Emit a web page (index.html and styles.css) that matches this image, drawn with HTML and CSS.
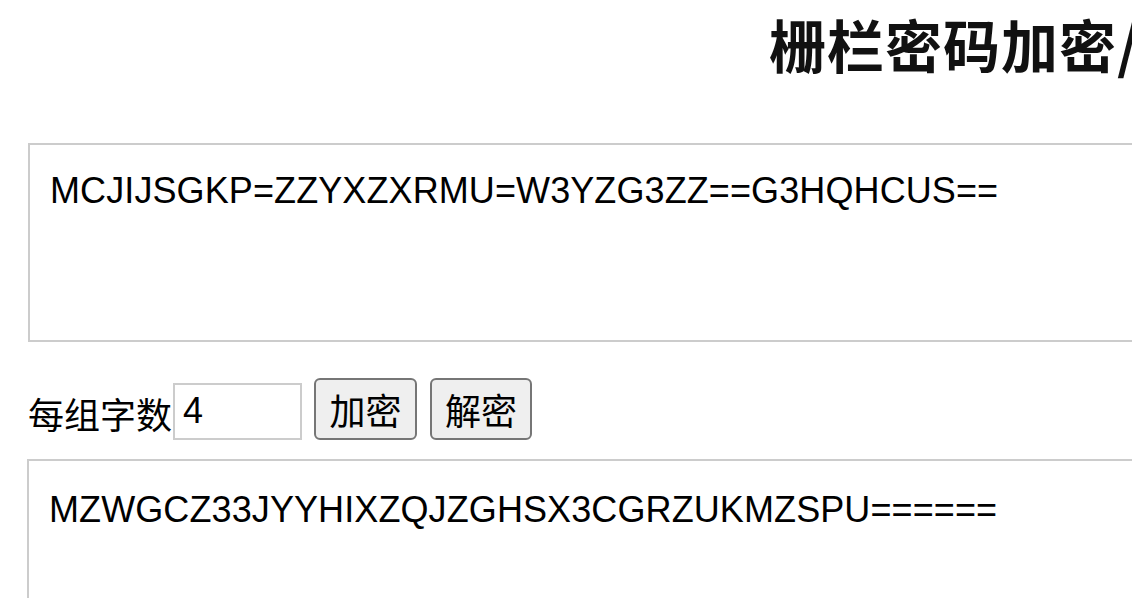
FILE: index.html
```html
<!DOCTYPE html>
<html lang="zh-CN">
<head>
<meta charset="utf-8">
<title>栅栏密码加密/解密</title>
<link rel="stylesheet" href="styles.css">
</head>
<body>
<div class="page">
  <h1 class="title">栅栏密码加密/解密</h1>
  <textarea class="box box-in" spellcheck="false">MCJIJSGKP=ZZYXZXRMU=W3YZG3ZZ==G3HQHCUS==</textarea>
  <div class="controls">
    <label class="label" for="num">每组字数</label>
    <input class="num" id="num" type="text" value="4">
    <button class="btn" type="button">加密</button>
    <button class="btn" type="button">解密</button>
  </div>
  <textarea class="box box-out" spellcheck="false">MZWGCZ33JYYHIXZQJZGHSX3CGRZUKMZSPU======</textarea>
</div>
</body>
</html>
```

FILE: styles.css
```css
html, body {
  margin: 0;
  padding: 0;
  overflow: hidden;
  background: #fff;
}
body {
  font-family: "Liberation Sans", "Noto Sans CJK SC", sans-serif;
  color: #000;
}
.page {
  display: flex;
  flex-direction: column;
  align-items: flex-start;
  padding-left: 28px;
  width: 1400px;
}
.title {
  margin: 9px 0 0 0;
  padding-left: 741px;
  font-size: 57px;
  font-weight: bold;
  line-height: 1.2;
  letter-spacing: 1px;
  white-space: nowrap;
  color: #111;
  font-family: "Noto Sans CJK SC", "Liberation Sans", sans-serif;
}
.box {
  box-sizing: border-box;
  width: 1300px;
  height: 199px;
  border: 2px solid #cccccc;
  font-family: "Liberation Sans", "Noto Sans CJK SC", sans-serif;
  font-size: 36px;
  line-height: 1.2;
  letter-spacing: 0.1px;
  color: #000;
  padding: 24px 20px;
  resize: none;
  overflow: hidden;
  outline: none;
  background: #fff;
  margin: 0;
}
.box-in {
  margin-top: 66px;
}
.box-out {
  margin-top: 19px;
  margin-left: -1px;
  padding-top: 27px;
}
.controls {
  display: flex;
  align-items: center;
  margin-top: 36px;
  height: 62px;
}
.label {
  font-size: 36px;
  font-family: "Noto Sans CJK SC", sans-serif;
  line-height: 1;
  margin-top: 7px;
}
.num {
  box-sizing: border-box;
  width: 129px;
  height: 57px;
  margin: 4px 0 0 1px;
  border: 2px solid #cccccc;
  font-family: "Liberation Sans", sans-serif;
  font-size: 36px;
  padding: 0 8px;
  outline: none;
  color: #000;
}
.btn {
  box-sizing: border-box;
  height: 62px;
  width: 103px;
  margin-left: 12px;
  padding: 0;
  border: 2px solid #767676;
  border-radius: 6px;
  background: #efefef;
  font-family: "Noto Sans CJK SC", sans-serif;
  font-size: 36px;
  color: #000;
}
.btn + .btn {
  margin-left: 13px;
  width: 102px;
}
```
